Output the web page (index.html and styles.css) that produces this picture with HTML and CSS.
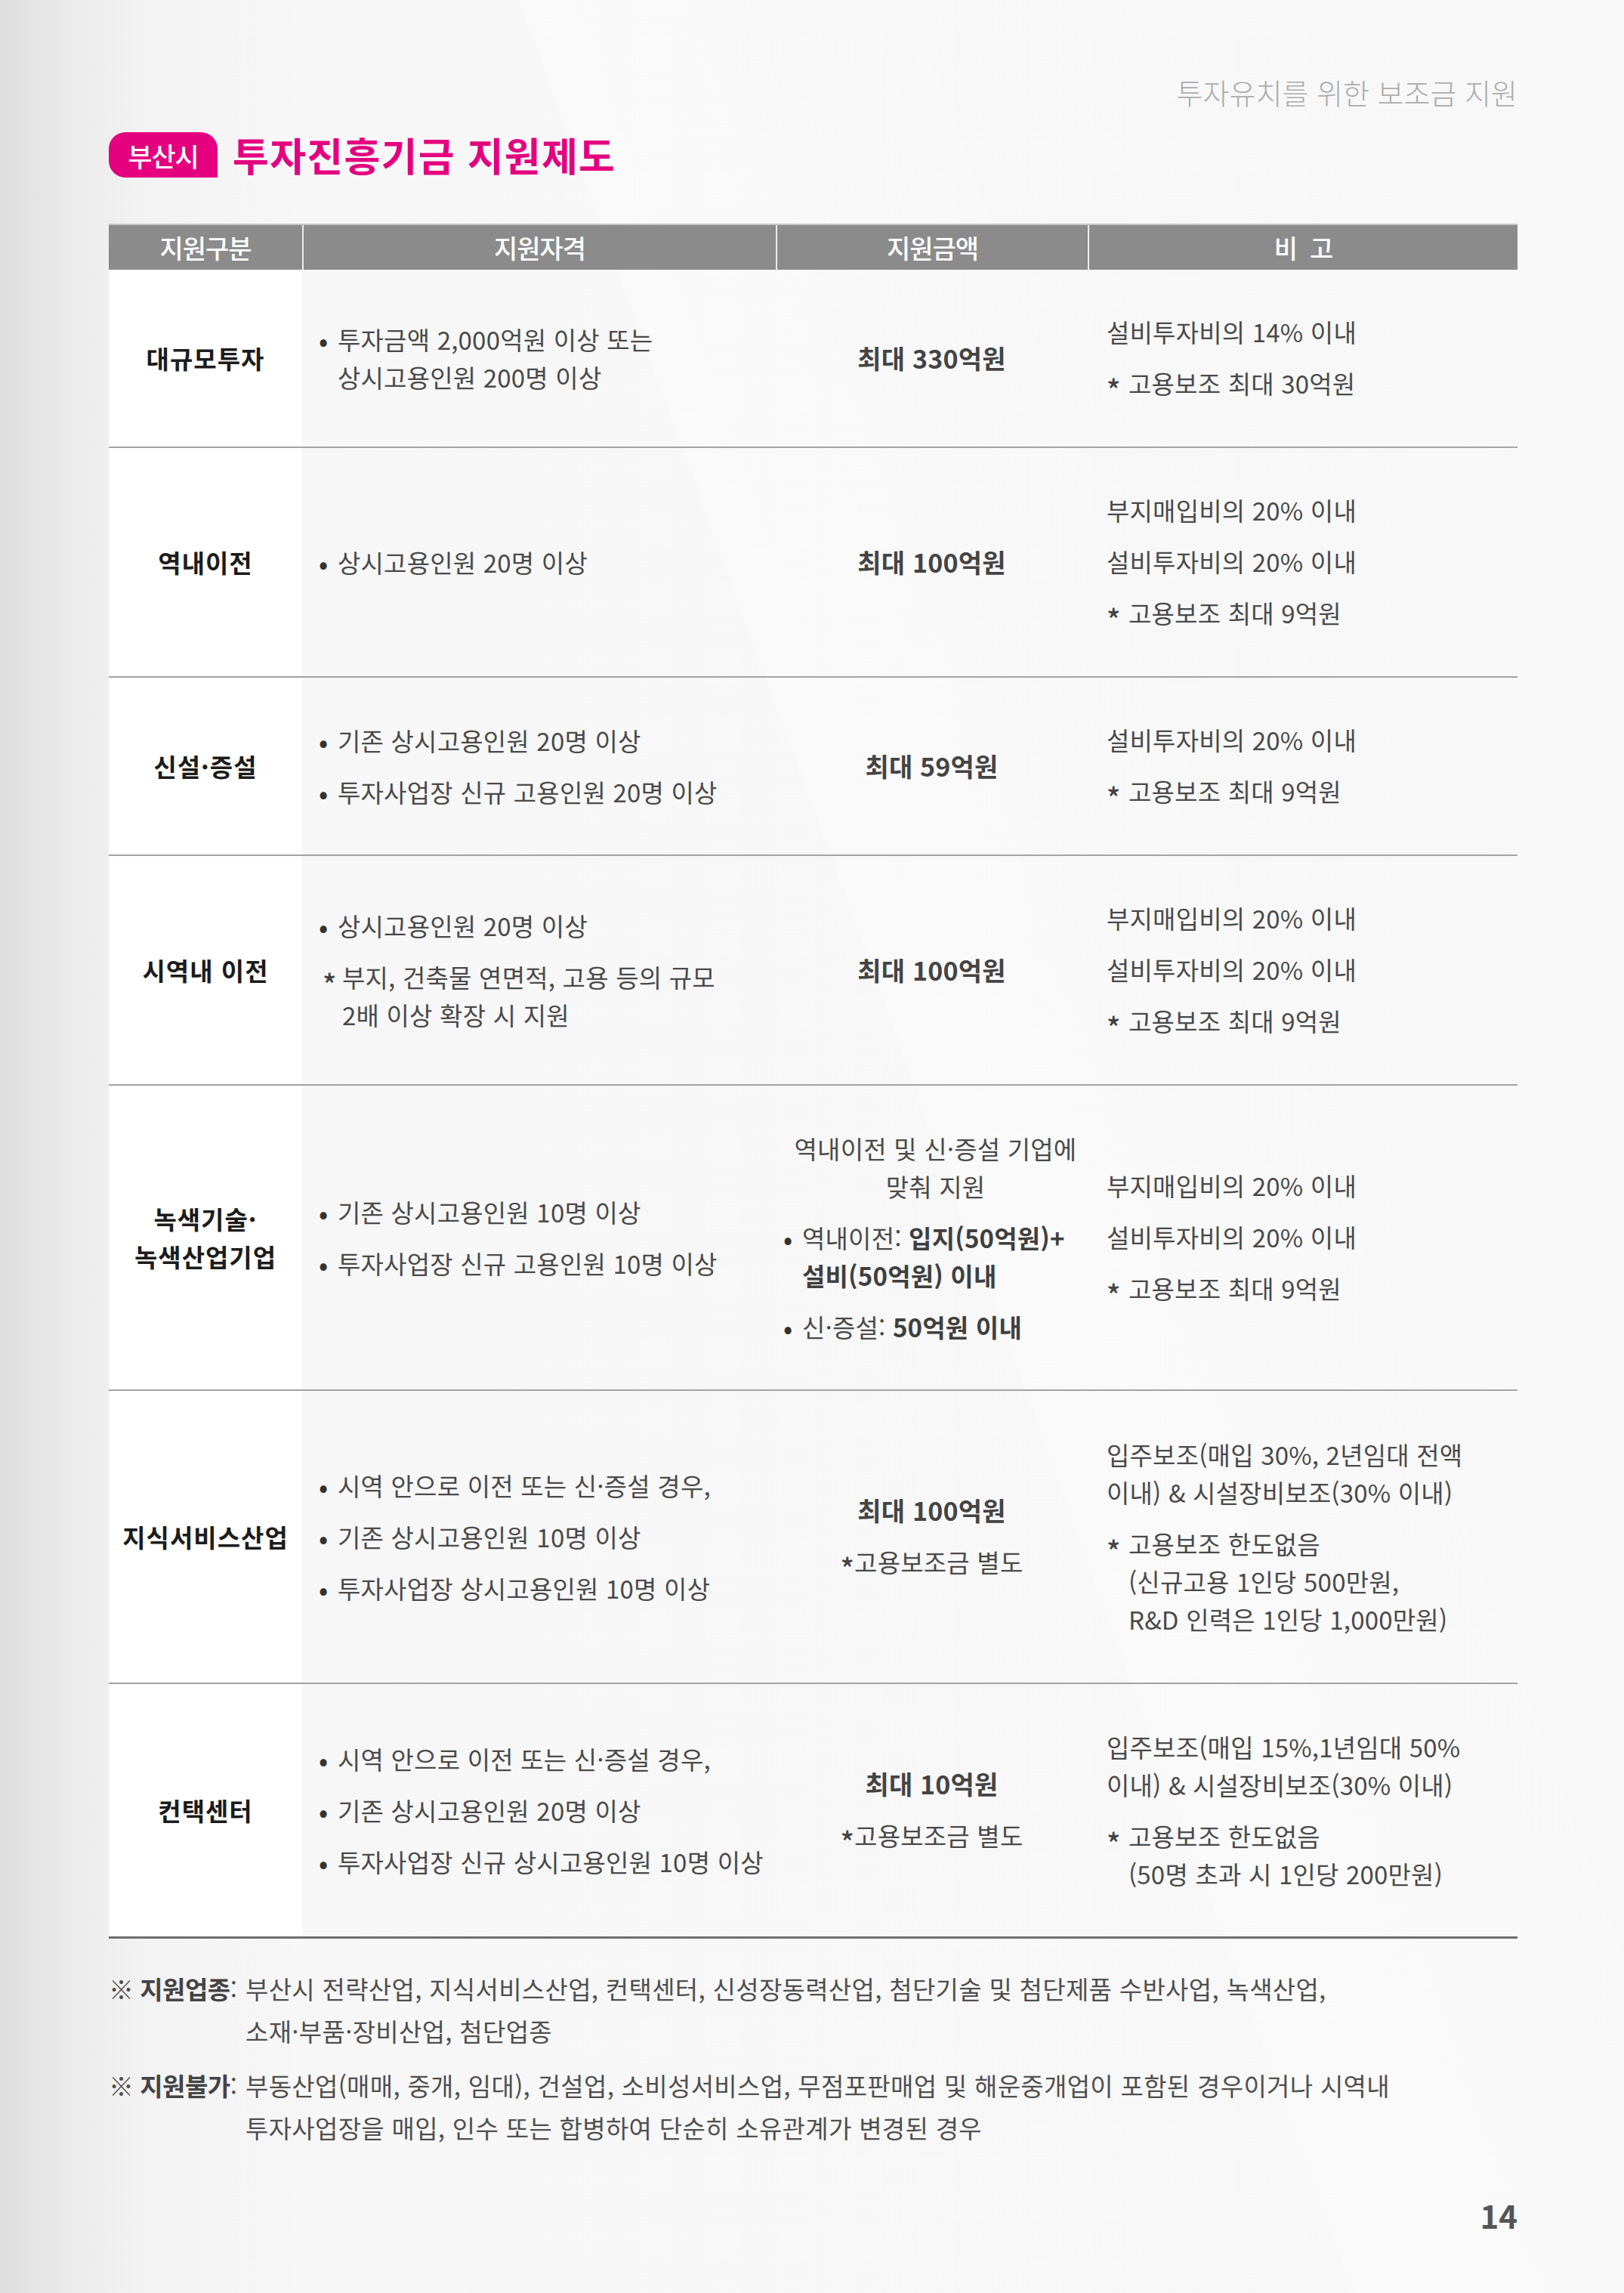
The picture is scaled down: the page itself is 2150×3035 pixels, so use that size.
FILE: index.html
```html
<!DOCTYPE html>
<html lang="ko">
<head>
<meta charset="utf-8">
<title>부산시 투자진흥기금 지원제도</title>
<link rel="stylesheet" href="styles.css">
</head>
<body>
<div class="page">
  <div class="running">투자유치를 위한 보조금 지원</div>
  <div class="title-row">
    <span class="badge">부산시</span>
    <h1 class="title">투자진흥기금 지원제도</h1>
  </div>

  <div class="table">
    <div class="row head">
      <div class="hc">지원구분</div>
      <div class="hc">지원자격</div>
      <div class="hc">지원금액</div>
      <div class="hc">비&nbsp;&nbsp;고</div>
    </div>

    <div class="row r1">
      <div class="c cat">대규모투자</div>
      <div class="c qual">
        <p class="it"><span class="mk">•</span><span>투자금액 2,000억원 이상 또는<br>상시고용인원 200명 이상</span></p>
      </div>
      <div class="c amt"><p class="big">최대 330억원</p></div>
      <div class="c note">
        <p>설비투자비의 14% 이내</p>
        <p class="it"><span class="mk2"><span class="ast">*</span></span><span>고용보조 최대 30억원</span></p>
      </div>
    </div>

    <div class="row r2">
      <div class="c cat">역내이전</div>
      <div class="c qual">
        <p class="it"><span class="mk">•</span><span>상시고용인원 20명 이상</span></p>
      </div>
      <div class="c amt"><p class="big">최대 100억원</p></div>
      <div class="c note">
        <p>부지매입비의 20% 이내</p>
        <p>설비투자비의 20% 이내</p>
        <p class="it"><span class="mk2"><span class="ast">*</span></span><span>고용보조 최대 9억원</span></p>
      </div>
    </div>

    <div class="row r3">
      <div class="c cat">신설·증설</div>
      <div class="c qual">
        <p class="it"><span class="mk">•</span><span>기존 상시고용인원 20명 이상</span></p>
        <p class="it"><span class="mk">•</span><span>투자사업장 신규 고용인원 20명 이상</span></p>
      </div>
      <div class="c amt"><p class="big">최대 59억원</p></div>
      <div class="c note">
        <p>설비투자비의 20% 이내</p>
        <p class="it"><span class="mk2"><span class="ast">*</span></span><span>고용보조 최대 9억원</span></p>
      </div>
    </div>

    <div class="row r4">
      <div class="c cat">시역내 이전</div>
      <div class="c qual">
        <p class="it"><span class="mk">•</span><span>상시고용인원 20명 이상</span></p>
        <p class="it"><span class="mk star"><span class="ast">*</span></span><span>부지, 건축물 연면적, 고용 등의 규모<br>2배 이상 확장 시 지원</span></p>
      </div>
      <div class="c amt"><p class="big">최대 100억원</p></div>
      <div class="c note">
        <p>부지매입비의 20% 이내</p>
        <p>설비투자비의 20% 이내</p>
        <p class="it"><span class="mk2"><span class="ast">*</span></span><span>고용보조 최대 9억원</span></p>
      </div>
    </div>

    <div class="row r5">
      <div class="c cat">녹색기술·<br>녹색산업기업</div>
      <div class="c qual">
        <p class="it"><span class="mk">•</span><span>기존 상시고용인원 10명 이상</span></p>
        <p class="it"><span class="mk">•</span><span>투자사업장 신규 고용인원 10명 이상</span></p>
      </div>
      <div class="c amt mixed">
        <p class="ctr">역내이전 및 신·증설 기업에<br>맞춰 지원</p>
        <p class="it"><span class="mk">•</span><span>역내이전: <b>입지(50억원)+<br>설비(50억원) 이내</b></span></p>
        <p class="it"><span class="mk">•</span><span>신·증설: <b>50억원 이내</b></span></p>
      </div>
      <div class="c note">
        <p>부지매입비의 20% 이내</p>
        <p>설비투자비의 20% 이내</p>
        <p class="it"><span class="mk2"><span class="ast">*</span></span><span>고용보조 최대 9억원</span></p>
      </div>
    </div>

    <div class="row r6">
      <div class="c cat">지식서비스산업</div>
      <div class="c qual">
        <p class="it"><span class="mk">•</span><span>시역 안으로 이전 또는 신·증설 경우,</span></p>
        <p class="it"><span class="mk">•</span><span>기존 상시고용인원 10명 이상</span></p>
        <p class="it"><span class="mk">•</span><span>투자사업장 상시고용인원 10명 이상</span></p>
      </div>
      <div class="c amt">
        <p class="big">최대 100억원</p>
        <p><span class="ast">*</span>고용보조금 별도</p>
      </div>
      <div class="c note">
        <p>입주보조(매입 30%, 2년임대 전액<br>이내) &amp; 시설장비보조(30% 이내)</p>
        <p class="it"><span class="mk2"><span class="ast">*</span></span><span>고용보조 한도없음<br>(신규고용 1인당 500만원,<br>R&amp;D 인력은 1인당 1,000만원)</span></p>
      </div>
    </div>

    <div class="row r7 last">
      <div class="c cat">컨택센터</div>
      <div class="c qual">
        <p class="it"><span class="mk">•</span><span>시역 안으로 이전 또는 신·증설 경우,</span></p>
        <p class="it"><span class="mk">•</span><span>기존 상시고용인원 20명 이상</span></p>
        <p class="it"><span class="mk">•</span><span>투자사업장 신규 상시고용인원 10명 이상</span></p>
      </div>
      <div class="c amt">
        <p class="big">최대 10억원</p>
        <p><span class="ast">*</span>고용보조금 별도</p>
      </div>
      <div class="c note">
        <p>입주보조(매입 15%,1년임대 50%<br>이내) &amp; 시설장비보조(30% 이내)</p>
        <p class="it"><span class="mk2"><span class="ast">*</span></span><span>고용보조 한도없음<br>(50명 초과 시 1인당 200만원)</span></p>
      </div>
    </div>
  </div>

  <div class="notes">
    <div class="fn">
      <span class="fl">※ <b>지원업종</b>:</span>
      <span class="ft">부산시 전략산업, 지식서비스산업, 컨택센터, 신성장동력산업, 첨단기술 및 첨단제품 수반사업, 녹색산업,<br>소재·부품·장비산업, 첨단업종</span>
    </div>
    <div class="fn">
      <span class="fl">※ <b>지원불가</b>:</span>
      <span class="ft">부동산업(매매, 중개, 임대), 건설업, 소비성서비스업, 무점포판매업 및 해운중개업이 포함된 경우이거나 시역내<br>투자사업장을 매입, 인수 또는 합병하여 단순히 소유관계가 변경된 경우</span>
    </div>
  </div>

  <div class="pageno">14</div>
</div>
</body>
</html>
```

FILE: styles.css
```css
* { box-sizing: border-box; }

html, body {
  margin: 0;
  padding: 0;
}

body {
  width: 2150px;
  min-height: 3035px;
  font-family: "Noto Sans CJK KR", "Noto Sans", sans-serif;
  color: #4a4a4a;
  background:
    linear-gradient(70deg, rgba(255,255,255,0) 0, rgba(255,255,255,0) 55%, rgba(255,255,255,0.35) 55.2%, rgba(255,255,255,0) 75%),
    linear-gradient(90deg, #dddddd 0, #ebebeb 90px, #f3f3f3 200px, #f7f7f7 400px, #f8f8f8 100%);
}

p { margin: 0; }

.page {
  padding: 95px 141px 0 144px;
}

.running {
  text-align: right;
  font-size: 38px;
  line-height: 54px;
  font-weight: 300;
  color: #ababab;
}

.title-row {
  margin-top: 26px;
  display: flex;
  align-items: center;
  height: 60px;
  gap: 20px;
}

.badge {
  display: flex;
  align-items: center;
  justify-content: center;
  width: 144px;
  height: 60px;
  background: #e4007f;
  color: #fff;
  font-size: 35px;
  font-weight: 500;
  border-radius: 22px 22px 0 22px;
  letter-spacing: -1px;
}

.title {
  margin: 0;
  font-size: 52px;
  line-height: 60px;
  font-weight: 700;
  color: #e4007f;
  letter-spacing: 1.3px;
}

.table {
  margin-top: 61px;
  width: 1865px;
}

.row {
  display: grid;
  grid-template-columns: 256px 627px 413px 569px;
  border-bottom: 2px solid #a3a3a3;
}

.row.head {
  height: 61px;
  background: #8b8b8b;
  border-top: 2px solid #c4c4c4;
  border-bottom: none;
}

.hc {
  display: flex;
  align-items: center;
  justify-content: center;
  color: #fff;
  font-size: 34px;
  font-weight: 500;
  letter-spacing: -1px;
  border-left: 2px solid #ededed;
}
.hc:first-child { border-left: none; }

.r1 { height: 236px; }
.r2 { height: 304px; }
.r3 { height: 236px; }
.r4 { height: 304px; }
.r5 { height: 404px; }
.r6 { height: 388px; }
.r7 { height: 337px; }
.row.last { border-bottom: 3px solid #6e6e6e; }

.c {
  display: flex;
  flex-direction: column;
  justify-content: center;
  gap: 18px;
  font-size: 33px;
  line-height: 50px;
  letter-spacing: 0.2px;
}

.cat {
  background: #fff;
  align-items: center;
  text-align: center;
  font-weight: 700;
  color: #1c1c1c;
  letter-spacing: 1px;
}

.qual { padding-left: 22px; }

.amt {
  align-items: center;
  text-align: center;
}
.amt .big {
  font-weight: 700;
  font-size: 34px;
  color: #444;
}

.amt.mixed {
  align-items: stretch;
  text-align: left;
  padding-left: 10px;
}
.amt.mixed .ctr { text-align: center; }
.amt.mixed b { font-weight: 700; color: #3f3f3f; }

.note { padding-left: 25px; }

.it { display: flex; }
.mk {
  flex: 0 0 25px;
  width: 25px;
  color: #333;
  font-size: 36px;
}
.mk.star {
  flex-basis: 31px;
  width: 31px;
  padding-left: 5px;
  font-size: 33px;
  color: #4a4a4a;
}
.mk2 {
  flex: 0 0 29px;
  width: 29px;
}

.ast {
  display: inline-block;
  font-size: 38px;
  line-height: 1;
  vertical-align: -0.28em;
  font-weight: 500;
  color: #444;
}

.notes {
  margin-top: 38px;
  display: flex;
  flex-direction: column;
  gap: 16px;
  font-size: 33px;
  line-height: 56px;
  letter-spacing: 0.3px;
  color: #4f4f4f;
}

.fn { display: flex; }
.fl {
  flex: 0 0 181px;
  white-space: nowrap;
  letter-spacing: -0.5px;
}
.fl b { font-weight: 700; color: #444; }

.pageno {
  margin-top: 63px;
  text-align: right;
  font-size: 42px;
  line-height: 50px;
  font-weight: 700;
  color: #555;
}
```
